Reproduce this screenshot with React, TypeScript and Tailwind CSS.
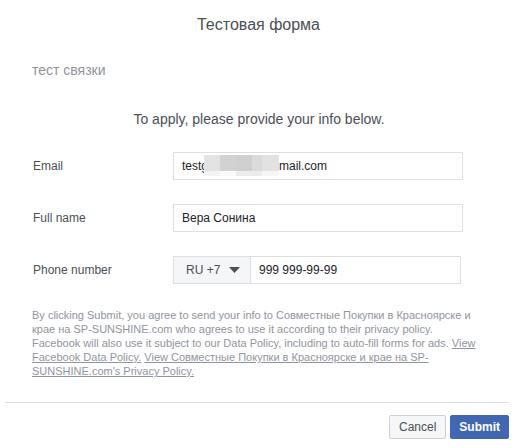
import React from "react";

function Blur() {
  return (
    <span className="inline-flex flex-col w-[75px] h-[21px] ml-[-4px] align-middle relative top-[-1px]">
      <span className="flex h-[16px]">
        <span className="w-[16px] bg-[#e3e3e3]" />
        <span className="w-[16px] bg-[#d2d2d2]" />
        <span className="w-[16px] bg-[#d0d0d0]" />
        <span className="w-[10px] bg-[#dbdbdb]" />
        <span className="w-[17px] bg-[#e2e2e2]" />
      </span>
      <span className="flex h-[5px]">
        <span className="w-[16px] bg-[#f3f3f3]" />
        <span className="w-[16px] bg-[#fafafa]" />
        <span className="w-[26px] bg-[#ececec]" />
        <span className="w-[17px] bg-[#f6f6f6]" />
      </span>
    </span>
  );
}

export default function App() {
  return (
    <div className="w-[517px] h-[448px] bg-white font-['Liberation_Sans',Arial,sans-serif] overflow-hidden">
      <div className="pt-[15px] h-[35px] text-center text-[16px] leading-[20px] text-[#4b4f56]">
        Тестовая форма
      </div>
      <div className="mt-[26px] pl-[32px] text-[14px] leading-[18px] text-[#90949c]">
        тест связки
      </div>
      <div className="mt-[31px] text-center text-[14px] leading-[18px] text-[#4b4f56] pl-[1px]">
        To apply, please provide your info below.
      </div>

      <div className="mt-[24px] flex flex-col gap-[24px] pl-[33px]">
        <div className="flex items-center h-[28px]">
          <div className="w-[140px] text-[12px] text-[#4b4f56]">Email</div>
          <div className="w-[290px] h-[28px] border border-[#dddfe2] pl-[8px] flex items-center text-[12px] text-[#1d2129] whitespace-nowrap">
            <span>testg</span>
            <Blur />
            <span>mail.com</span>
          </div>
        </div>
        <div className="flex items-center h-[28px]">
          <div className="w-[140px] text-[12px] text-[#4b4f56]">Full name</div>
          <div className="w-[290px] h-[28px] border border-[#dddfe2] pl-[8px] flex items-center text-[12px] text-[#1d2129]">
            Вера Сонина
          </div>
        </div>
        <div className="flex items-center h-[28px]">
          <div className="w-[140px] text-[12px] text-[#4b4f56]">Phone number</div>
          <div className="flex h-[28px]">
            <div className="w-[78px] h-[28px] border border-[#dddfe2] bg-[#f5f6f7] pl-[12px] flex items-center text-[12px] text-[#4b4f56]">
              <span>RU +7</span>
              <svg width="11" height="6" viewBox="0 0 11 6" className="ml-[9px]">
                <path d="M0 0 L11 0 L5.5 6 Z" fill="#4b4f56" />
              </svg>
            </div>
            <div className="w-[210px] h-[28px] border border-l-0 border-[#dddfe2] pl-[8px] flex items-center text-[12px] text-[#1d2129]">
              999 999-99-99
            </div>
          </div>
        </div>
      </div>

      <div className="mt-[24px] pl-[32px] text-[11px] leading-[14px] text-[#90949c] whitespace-nowrap">
        By clicking Submit, you agree to send your info to Совместные Покупки в Красноярске и
        <br />
        крае на SP-SUNSHINE.com who agrees to use it according to their privacy policy.
        <br />
        Facebook will also use it subject to our Data Policy, including to auto-fill forms for ads.{" "}
        <span className="underline">View</span>
        <br />
        <span className="underline">Facebook Data Policy.</span>{" "}
        <span className="underline">View Совместные Покупки в Красноярске и крае на SP-</span>
        <br />
        <span className="underline">SUNSHINE.com's Privacy Policy.</span>
      </div>

      <div className="mt-[24px] ml-[5px] w-[504px] h-px bg-[#dddfe2]" />

      <div className="mt-[12px] flex justify-end gap-[4px] pr-[8px]">
        <button className="h-[24px] px-[9px] border border-[#ced0d4] bg-[#f5f6f7] rounded-[2px] text-[12px] text-[#4b4f56] leading-none">
          Cancel
        </button>
        <button className="h-[24px] px-[8px] border border-[#4267b2] bg-[#4267b2] rounded-[2px] text-[12px] font-bold text-white leading-none">
          Submit
        </button>
      </div>
    </div>
  );
}
